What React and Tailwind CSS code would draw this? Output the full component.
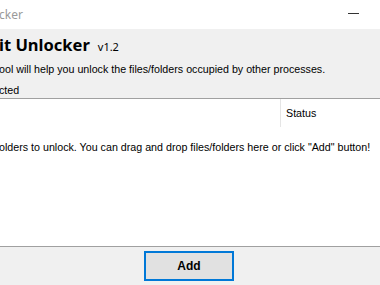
export default function App() {
    return (
        <div className="w-[380px] h-[285px] overflow-hidden flex flex-col bg-[#f0f0f0] text-black font-['Liberation_Sans',sans-serif]">
            {/* Title bar */}
            <div className="h-[29px] bg-white flex items-center justify-between shrink-0">
                <span className="text-[12px] text-[#9a9a9a] ml-[-1px] font-['Noto_Sans',sans-serif]">cker</span>
                <div className="w-[11px] h-px bg-[#333] mr-[21px] mt-[-2px]" />
            </div>

            {/* Header */}
            <div className="h-[70px] shrink-0 border-b border-[#a0a0a0] flex flex-col">
                <div className="flex items-baseline mt-[4px] h-[26px]">
                    <span className="text-[16.5px] font-bold ml-[-1px] font-['Noto_Sans',sans-serif]">it Unlocker</span>
                    <span className="text-[11px] ml-[8px] font-['Noto_Sans',sans-serif]">v1.2</span>
                </div>
                <div className="text-[10.7px] mt-[2px] h-[18px] leading-[18px] ml-[-1px] whitespace-nowrap">
                    ool will help you unlock the files/folders occupied by other processes.
                </div>
                <div className="text-[10.7px] mt-[3px] leading-[18px] ml-[-1px]">cted</div>
            </div>

            {/* List */}
            <div className="flex-1 bg-white flex flex-col">
                <div className="h-[28px] flex shrink-0">
                    <div className="w-[281px] border-r border-[#e5e5e5]" />
                    <div className="text-[10.7px] leading-[28px] pl-[5px]">Status</div>
                </div>
                <div className="text-[10.7px] leading-[18px] mt-[11px] ml-[-1px] whitespace-nowrap">
                    olders to unlock. You can drag and drop files/folders here or click "Add" button!
                </div>
            </div>

            {/* Footer */}
            <div className="h-[39px] shrink-0 border-t border-[#a0a0a0] flex justify-center pt-[4px]">
                <button className="w-[90px] h-[30px] ml-[-2px] bg-[#e1e1e1] border-2 border-[#0078d7] text-[12px] font-bold">
                    Add
                </button>
            </div>
        </div>
    );
}
